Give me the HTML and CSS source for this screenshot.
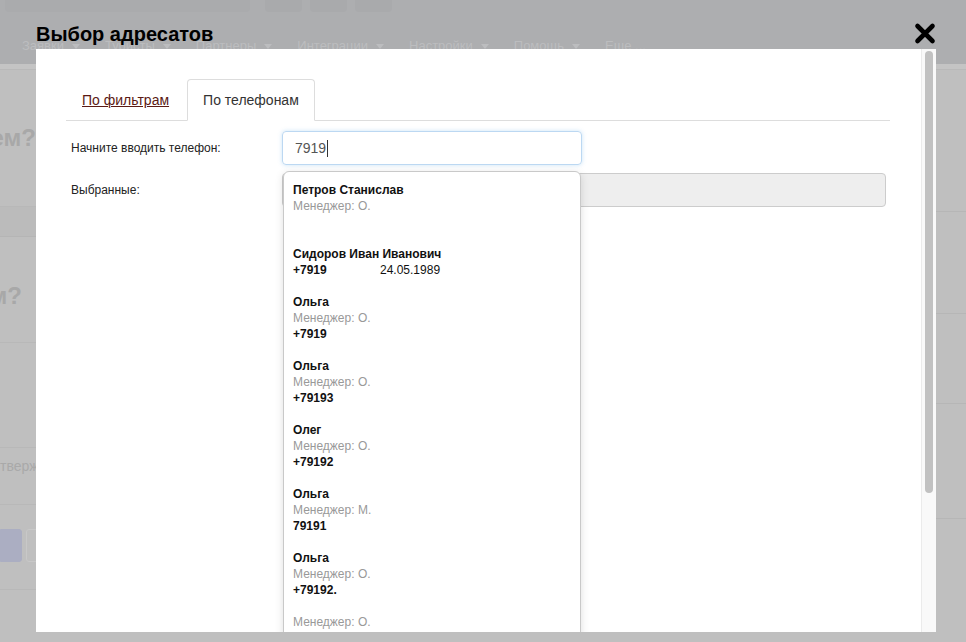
FILE: index.html
```html
<!DOCTYPE html>
<html lang="ru">
<head>
<meta charset="utf-8">
<title>Выбор адресатов</title>
<link rel="stylesheet" href="styles.css">
</head>
<body>
<div class="app">
  <header class="topbar">
    <div class="toolbar">
      <div class="search"></div>
      <div class="tool-btn"></div>
      <div class="tool-btn"></div>
      <div class="tool-btn"></div>
    </div>
    <nav class="mainnav">
      <span class="nav-item">Заявки<i class="caret"></i></span>
      <span class="nav-item">Туристы<i class="caret"></i></span>
      <span class="nav-item">Партнеры<i class="caret"></i></span>
      <span class="nav-item">Интеграции<i class="caret"></i></span>
      <span class="nav-item">Настройки<i class="caret"></i></span>
      <span class="nav-item">Помощь<i class="caret"></i></span>
      <span class="nav-item">Еще ...</span>
    </nav>
  </header>
  <main class="app-content">
    <div class="bg-left">
      <div class="band"></div>
      <div class="bg-heading"><span>Кому отправляем?</span></div>
      <div class="bg-sub"></div>
      <div class="bg-heading second"><span>Когда отправим?</span></div>
      <div class="bg-row"></div>
      <div class="bg-note"><span>тверждаю</span></div>
      <div class="bg-actions"><span class="bg-btn primary"></span><span class="bg-btn"></span></div>
    </div>
    <div class="bg-right">
      <div class="band"></div>
      <div class="r-row h142"></div>
      <div class="r-row h102"></div>
      <div class="r-row h90"></div>
      <div class="r-row h115"></div>
    </div>
  </main>
</div>

<div class="overlay">
  <div class="dialog">
    <div class="dialog-head">
      <h1>Выбор адресатов</h1>
      <button class="close" type="button" aria-label="Закрыть">
        <svg width="22" height="23" viewBox="0 0 22 23"><path d="M3.5 4 L18.5 19 M18.5 4 L3.5 19" stroke="#000" stroke-width="4.6" stroke-linecap="round" fill="none"/></svg>
      </button>
    </div>
    <div class="dialog-body">
      <div class="dialog-scroll">
        <ul class="tabs">
          <li class="tab"><a href="#">По фильтрам</a></li>
          <li class="tab active">По телефонам</li>
        </ul>
        <div class="tab-pane">
          <div class="form-row">
            <label>Начните вводить телефон:</label>
            <div class="field">
              <div class="phone-input">7919<span class="cursor"></span></div>
              <ul class="suggest">
                <li><b>Петров Станислав</b><span class="mgr">Менеджер: О.</span><span class="tel">&nbsp;</span></li>
                <li><b>Сидоров Иван Иванович</b><span class="tel"><span class="num">+7919</span><span class="date">24.05.1989</span></span></li>
                <li><b>Ольга</b><span class="mgr">Менеджер: О.</span><span class="tel">+7919</span></li>
                <li><b>Ольга</b><span class="mgr">Менеджер: О.</span><span class="tel">+79193</span></li>
                <li><b>Олег</b><span class="mgr">Менеджер: О.</span><span class="tel">+79192</span></li>
                <li><b>Ольга</b><span class="mgr">Менеджер: М.</span><span class="tel">79191</span></li>
                <li><b>Ольга</b><span class="mgr">Менеджер: О.</span><span class="tel">+79192.</span></li>
                <li><span class="mgr">Менеджер: О.</span><span class="tel">+7919</span></li>
              </ul>
            </div>
          </div>
          <div class="form-row">
            <label>Выбранные:</label>
            <div class="selected-box"></div>
          </div>
        </div>
      </div>
      <div class="scrollbar"><div class="thumb"></div></div>
    </div>
  </div>
</div>
</body>
</html>
```
FILE: styles.css
```css
* { box-sizing: border-box; }

html, body {
  margin: 0;
  width: 966px;
  height: 642px;
  overflow: hidden;
}

body {
  position: relative;
  font-family: "Liberation Sans", Arial, sans-serif;
  background: #bfbfbf;
  color: #222;
}

/* ---------- dimmed application behind the dialog ---------- */

.topbar {
  height: 64px;
  background: #adaeb0;
}

.toolbar {
  display: flex;
  gap: 8px;
  height: 12px;
  padding-left: 5px;
}

.search {
  width: 245px;
  height: 12px;
  margin-right: 7px;
  background: #aaabad;
  border-radius: 0 0 4px 4px;
}

.tool-btn {
  width: 37px;
  height: 12px;
  background: #a9aaac;
  border-radius: 0 0 4px 4px;
}

.mainnav {
  display: flex;
  gap: 25px;
  padding-left: 22px;
  margin-top: 26px;
  font-size: 13px;
  line-height: 16px;
  color: #bcbdbf;
}

.nav-item {
  display: flex;
  align-items: center;
  white-space: nowrap;
}

.caret {
  width: 0;
  height: 0;
  margin-left: 8px;
  border-top: 5px solid #bcbdbf;
  border-left: 4px solid transparent;
  border-right: 4px solid transparent;
}

.app-content {
  display: flex;
  justify-content: space-between;
  height: 578px;
}

.bg-left {
  width: 36px;
  overflow: hidden;
}

.band {
  height: 6px;
  background: #c4c4c4;
  border-bottom: 1px solid #b9b9b9;
}

.bg-heading {
  display: flex;
  justify-content: flex-end;
  height: 137px;
  padding-top: 54px;
  font-size: 24px;
  font-weight: bold;
  line-height: 28px;
  color: #a8a8a8;
  white-space: nowrap;
  border-bottom: 1px solid #b8b8b8;
}

.bg-heading.second {
  height: 106px;
  padding-top: 45px;
  padding-right: 14px;
}

.bg-sub {
  height: 30px;
  background: #bbbbbb;
  border-bottom: 1px solid #b5b5b5;
}

.bg-row {
  height: 105px;
  border-bottom: 1px solid #b8b8b8;
}

.bg-note {
  height: 57px;
  padding-top: 10px;
  font-size: 14px;
  line-height: 16px;
  color: #a9a9a9;
  white-space: nowrap;
  border-bottom: 1px solid #b8b8b8;
}

.bg-actions {
  display: flex;
  gap: 4px;
  height: 85px;
  padding-top: 24px;
  border-bottom: 1px solid #b8b8b8;
}

.bg-btn {
  display: block;
  flex: none;
  width: 40px;
  height: 33px;
  border: 1px solid #c8c8c8;
  border-radius: 3px;
}

.bg-btn.primary {
  width: 22px;
  background: #abaec2;
  border-color: #abaec2;
  border-radius: 0 3px 3px 0;
}

.bg-right {
  width: 30px;
}

.r-row {
  border-bottom: 1px solid #b6b6b6;
}

.h142 { height: 142px; }
.h102 { height: 102px; }
.h90  { height: 90px; }
.h115 { height: 115px; }

/* ---------- dialog ---------- */

.overlay {
  position: absolute;
  inset: 0;
}

.dialog {
  position: absolute;
  left: 36px;
  top: 22px;
  width: 900px;
}

.dialog-head {
  position: relative;
  height: 27px;
}

.dialog-head h1 {
  margin: 0;
  font-size: 20px;
  line-height: 24px;
  font-weight: bold;
  color: #000;
}

.close {
  position: absolute;
  right: 0;
  top: 0;
  width: 22px;
  height: 23px;
  padding: 0;
  border: 0;
  background: none;
}

.close svg { display: block; }

.dialog-body {
  display: flex;
  height: 583px;
  background: #fff;
  overflow: hidden;
}

.dialog-scroll {
  flex: 1;
  padding: 30px 31px 0 30px;
}

.scrollbar {
  width: 15px;
  padding: 2px 3px 0 3px;
  background: #f9f9f9;
  border-left: 1px solid #ebebeb;
}

.thumb {
  height: 442px;
  background: #c1c1c1;
  border-radius: 5px;
}

/* tabs */

.tabs {
  display: flex;
  margin: 0;
  padding: 0;
  list-style: none;
  border-bottom: 1px solid #dddddd;
}

.tab {
  margin: 0 2px -1px 0;
  padding: 0 15px;
  font-size: 14px;
  line-height: 40px;
  color: #333;
  border: 1px solid transparent;
  border-radius: 4px 4px 0 0;
}

.tab a {
  color: #5b1a14;
  text-decoration: underline;
}

.tab.active {
  background: #fff;
  border-color: #dddddd;
  border-bottom-color: #fff;
}

/* form */

.tab-pane {
  padding-top: 10px;
}

.form-row {
  display: grid;
  grid-template-columns: 216px 1fr;
  align-items: center;
  padding-right: 4px;
}

.form-row + .form-row {
  margin-top: 8px;
}

.form-row label {
  padding-left: 5px;
  font-size: 12px;
  color: #222;
}

.field {
  position: relative;
  z-index: 2;
}

.phone-input {
  display: flex;
  align-items: center;
  width: 300px;
  height: 34px;
  padding-left: 12px;
  font-size: 14px;
  color: #555;
  border: 1px solid #bcd8f2;
  border-radius: 4px;
  box-shadow: 0 0 4px rgba(102, 175, 233, 0.35);
}

.cursor {
  width: 1px;
  height: 17px;
  margin-left: 1px;
  background: #333;
}

.selected-box {
  height: 34px;
  background: #eeeeee;
  border: 1px solid #cccccc;
  border-radius: 4px;
}

/* suggestion list */

.suggest {
  position: absolute;
  left: 1px;
  top: 40px;
  width: 298px;
  height: 520px;
  margin: 0;
  padding: 0;
  list-style: none;
  background: #fff;
  border: 1px solid #c9c9c9;
  border-radius: 6px 6px 0 0;
  box-shadow: 0 2px 9px rgba(0, 0, 0, 0.13);
}

.suggest li {
  padding: 10px 9px 6px;
  font-size: 12px;
  line-height: 16px;
}

.suggest b,
.suggest .mgr,
.suggest .tel {
  display: block;
}

.suggest b {
  color: #111;
}

.suggest .mgr {
  color: #999;
}

.suggest .tel {
  font-weight: bold;
  color: #111;
}

.suggest .num {
  display: inline-block;
  width: 87px;
}

.suggest .date {
  font-weight: normal;
}
```
